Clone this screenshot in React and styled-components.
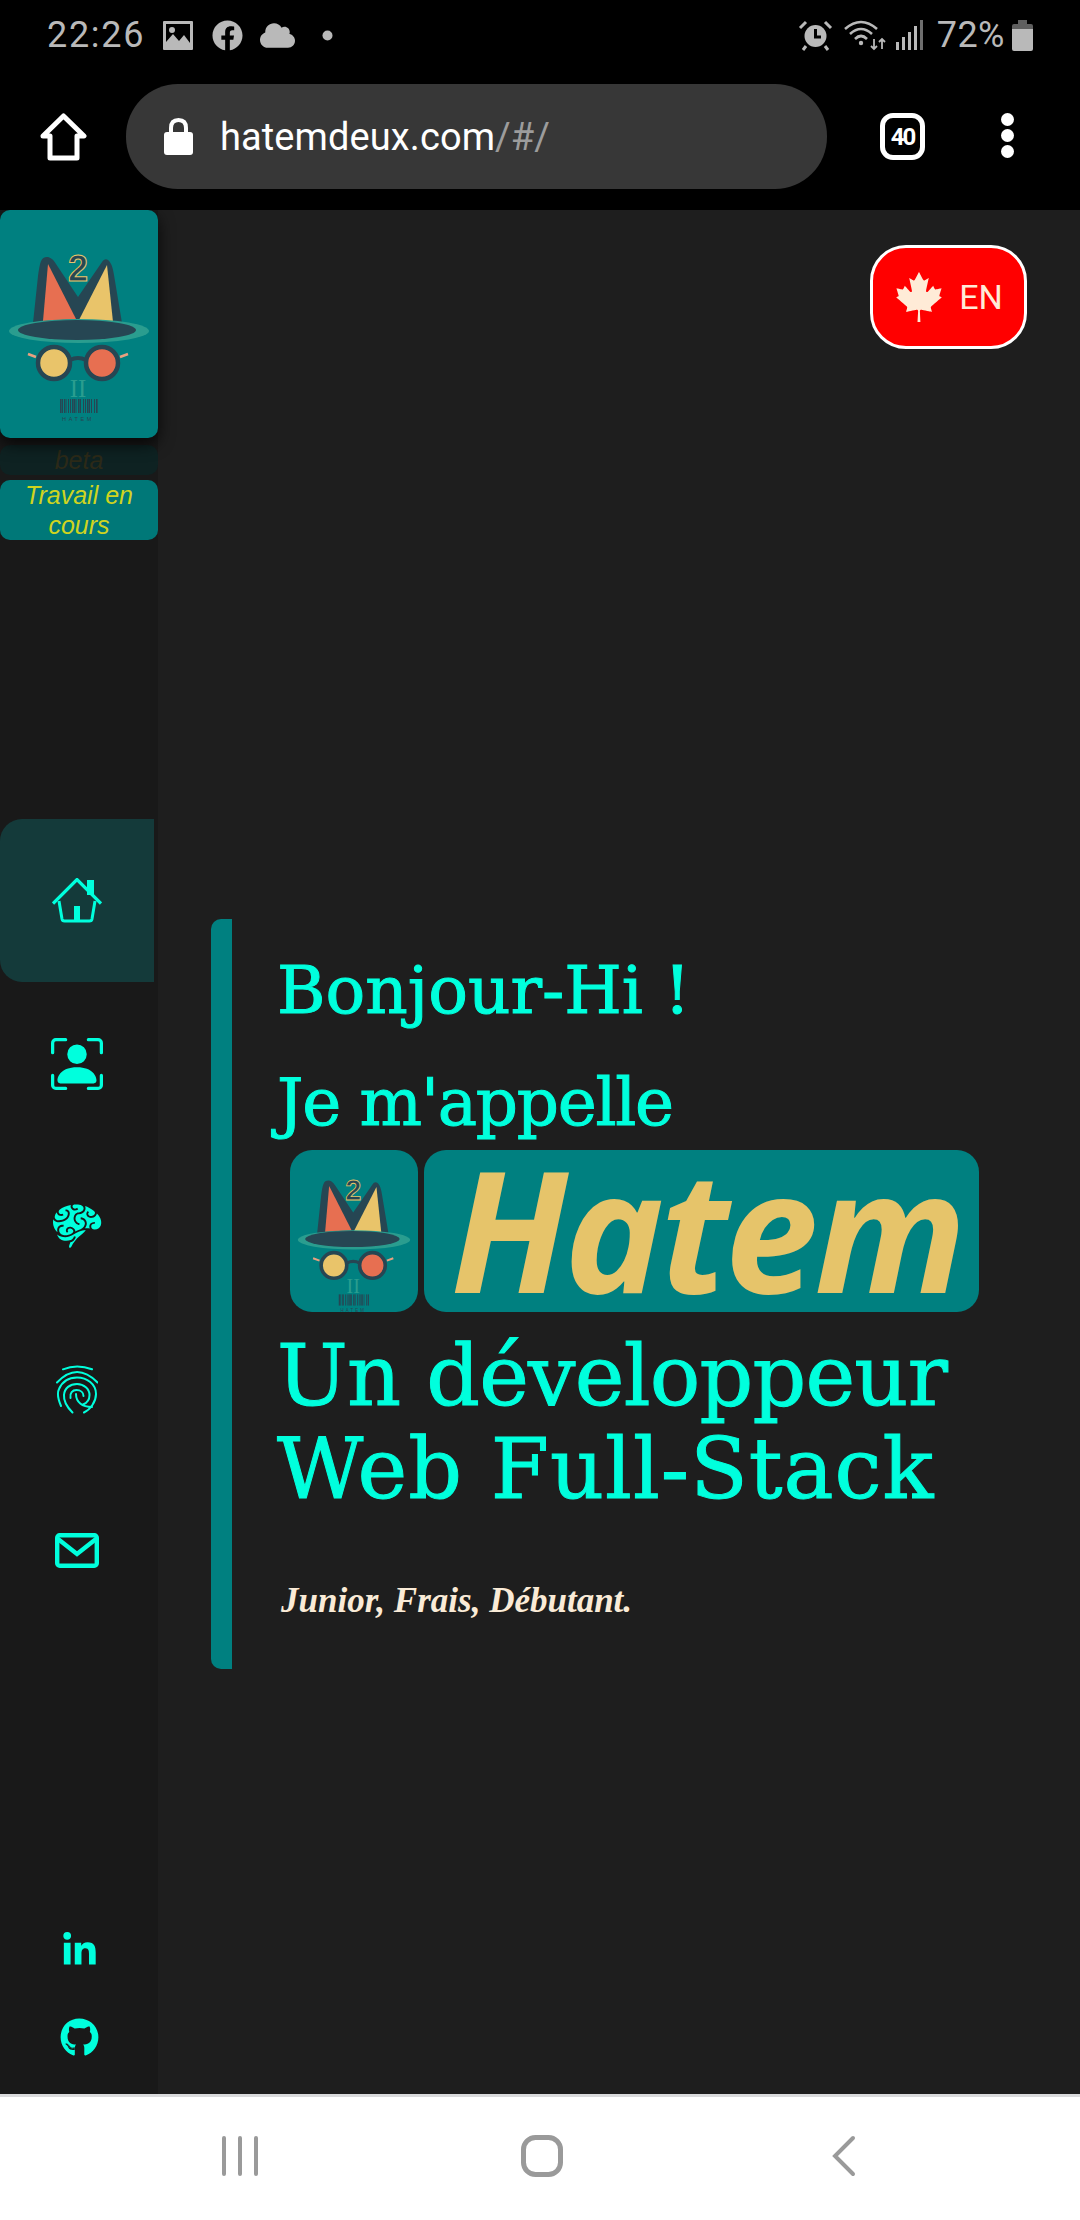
import React from 'react';
import styled, { createGlobalStyle } from 'styled-components';
import { FaCanadianMapleLeaf, FaLinkedinIn, FaGithub, FaFacebook, FaCloud } from 'react-icons/fa';
import { GiBrain } from 'react-icons/gi';
import { BsPersonBoundingBox } from 'react-icons/bs';

const AQUA = '#00ffdd';
const TEAL = '#008080';
const STATUS = '#b9b9b9';

const GlobalStyle = createGlobalStyle`
  html, body { margin: 0; padding: 0; background: #000; }
  * { box-sizing: border-box; }
`;

const Phone = styled.div`
  width: 1080px;
  height: 2220px;
  display: flex;
  flex-direction: column;
  background: #1e1e1e;
  overflow: hidden;
  font-family: Roboto, 'Liberation Sans', sans-serif;
`;

const StatusBar = styled.div`
  height: 70px;
  flex: none;
  background: #000;
  color: ${STATUS};
  display: flex;
  align-items: center;
  padding: 0 47px 0 47px;
  font-size: 36px;
`;

const StatusGroup = styled.div`
  display: flex;
  align-items: center;
`;

const Clock = styled.span`
  width: 112px;
  letter-spacing: 1.7px;
`;

const Spacer = styled.div`
  flex: 1;
`;

const Percent = styled.span`
  margin: 0 7px 0 13px;
  letter-spacing: 0.5px;
`;

const BrowserBar = styled.div`
  height: 140px;
  flex: none;
  background: #000;
  display: flex;
  align-items: flex-start;
  padding: 14px 0 0 40px;
`;

const BrowserHome = styled.svg`
  width: 47px;
  height: 48px;
  margin-top: 29px;
  flex: none;
`;

const UrlPill = styled.div`
  width: 701px;
  height: 105px;
  margin-left: 39px;
  border-radius: 52px;
  background: #373737;
  display: flex;
  align-items: center;
  padding-left: 38px;
`;

const Url = styled.span`
  margin-left: 27px;
  font-size: 38px;
  color: #fff;
  letter-spacing: 0.1px;
`;

const UrlPath = styled.span`
  color: #9c9c9c;
`;

const TabCount = styled.div`
  width: 45px;
  height: 47px;
  margin: 29px 0 0 53px;
  border: 5px solid #fff;
  border-radius: 13px;
  color: #fff;
  font-size: 24px;
  font-weight: 700;
  letter-spacing: -2px;
  display: flex;
  align-items: center;
  justify-content: center;
`;

const MenuDots = styled.div`
  margin: 29px 0 0 76px;
  display: flex;
  flex-direction: column;
  gap: 3px;
`;

const MenuDot = styled.span`
  width: 13px;
  height: 13px;
  border-radius: 50%;
  background: #fff;
`;

const Page = styled.div`
  flex: 1;
  display: flex;
  min-height: 0;
`;

const Sidebar = styled.aside`
  width: 158px;
  flex: none;
  background: #191919;
  display: flex;
  flex-direction: column;
`;

const LogoCard = styled.div`
  height: 228px;
  background: ${TEAL};
  border-radius: 10px;
  box-shadow: 0 6px 16px rgba(0, 0, 0, 0.75);
  position: relative;
`;

const BetaTag = styled.div`
  height: 30px;
  margin-top: 7px;
  border-radius: 10px;
  background: #0e2222;
  color: #2c2a18;
  font: italic 25px/30px 'Liberation Sans', Arial, sans-serif;
  text-align: center;
`;

const WipTag = styled.div`
  height: 60px;
  margin-top: 5px;
  border-radius: 10px;
  background: #007878;
  color: #cfd41f;
  font: italic 25px/30px 'Liberation Sans', Arial, sans-serif;
  text-align: center;
`;

const Nav = styled.nav`
  margin-top: 279px;
  display: flex;
  flex-direction: column;
`;

const NavItem = styled.div`
  width: 154px;
  height: 163px;
  display: flex;
  align-items: center;
  justify-content: center;
  padding-bottom: ${(p) => p.$lift || 0}px;
  color: ${AQUA};
  background: ${(p) => (p.$active ? '#143a3a' : 'transparent')};
  border-radius: 22px 0 0 22px;
`;

const Socials = styled.div`
  margin-top: auto;
  padding-bottom: 37px;
  display: flex;
  flex-direction: column;
  align-items: center;
  gap: 49px;
  color: ${AQUA};
`;

const Main = styled.main`
  flex: 1;
  display: flex;
  flex-direction: column;
  align-items: flex-start;
  padding: 35px 53px 0;
`;

const LangButton = styled.button`
  align-self: flex-end;
  width: 157px;
  height: 104px;
  border: 3px solid #fff;
  border-radius: 36px;
  background: #f00;
  color: #ffebd7;
  font: 400 34px Roboto, sans-serif;
  display: flex;
  align-items: center;
  justify-content: center;
  gap: 15px;
  padding: 0;
`;

const Hero = styled.section`
  margin-top: 570px;
  width: 768px;
  height: 750px;
  border-left: 21px solid ${TEAL};
  border-radius: 10px 0 0 10px;
  padding-left: 45px;
  color: ${AQUA};
  font-family: 'DejaVu Serif', 'Liberation Serif', serif;
  -webkit-text-stroke: 1px ${AQUA};
`;

const Greetings = styled.div`
  padding-top: 27px;
  display: flex;
  flex-direction: column;
  gap: 22px;
`;

const Greeting = styled.div`
  font-size: 66px;
  line-height: 90px;
  white-space: nowrap;
  letter-spacing: ${(p) => p.$spacing || 0}px;
`;

const NameRow = styled.div`
  display: flex;
  gap: 6px;
  margin: 2px 0 0 13px;
  -webkit-text-stroke: 0;
`;

const LogoTile = styled.div`
  width: 128px;
  height: 162px;
  background: ${TEAL};
  border-radius: 22px;
  overflow: hidden;
`;

const NameTile = styled.div`
  width: 555px;
  height: 162px;
  padding-left: 10px;
  background: ${TEAL};
  border-radius: 22px;
  color: #e6c46a;
  font: italic 700 168px/156px 'Open Sans', sans-serif;
  text-align: center;
  letter-spacing: -4px;
`;

const Headline = styled.h1`
  margin: 18px 0 0;
  font-size: 84px;
  font-weight: 400;
  line-height: 93px;
`;

const HeadlineLine = styled.div`
  white-space: nowrap;
  letter-spacing: ${(p) => p.$spacing || 0}px;
`;

const Tagline = styled.p`
  margin: 63px 0 0 4px;
  color: #faebd7;
  font: italic 700 35px/44px 'Liberation Serif', serif;
  -webkit-text-stroke: 0;
`;

const BottomNav = styled.div`
  height: 126px;
  flex: none;
  background: #fff;
  border-top: 3px solid #d9dadc;
  display: grid;
  grid-template-columns: repeat(3, 1fr);
  align-items: center;
  justify-items: center;
  padding: 0 85px 5px 89px;
`;

function HatLogo({ viewBox = '0 0 158 228' }) {
  const bars = [60, 62, 64, 65.5, 68, 70, 72, 74, 75.5, 78, 80, 83, 85, 87, 89, 91, 94, 96];
  return (
    <svg viewBox={viewBox} width="100%" height="100%">
      <path d="M47 47 C41 47 40 52 38 66 L33 113 H122 L114 65 C112 50 106 46 102 52 L78 87 L56 54 C53 49 50 47 47 47Z" fill="#264653" />
      <path d="M48 54 L43 111 L76 109Z" fill="#e76f51" />
      <path d="M107 55 L79 110 L113 112Z" fill="#e9c46a" />
      <text x="78" y="71" textAnchor="middle" fontFamily="'Liberation Sans', sans-serif" fontWeight="700" fontSize="36" fill="#264653" stroke="#e9c46a" strokeWidth="1">2</text>
      <ellipse cx="79" cy="121" rx="70" ry="12" fill="#2a9d8f" />
      <ellipse cx="77" cy="120" rx="59" ry="10" fill="#264653" />
      <path d="M28 144 L36 147 M128 144 L120 147" stroke="#e9a080" strokeWidth="2.5" />
      <path d="M70 150 Q78 146 86 150" stroke="#264653" strokeWidth="4" fill="none" />
      <circle cx="54" cy="153" r="16" fill="#e9c46a" stroke="#264653" strokeWidth="4.5" />
      <circle cx="102" cy="153" r="16" fill="#e76f51" stroke="#264653" strokeWidth="4.5" />
      <text x="78" y="187" textAnchor="middle" fontFamily="'Liberation Serif', serif" fontSize="25" fill="#2a9d8f">II</text>
      {bars.map((x) => (
        <rect key={x} x={x} y="189" width={x % 3 === 0 ? 1.6 : 1} height="14" fill="#264653" />
      ))}
      <text x="78" y="211" textAnchor="middle" fontFamily="'Liberation Sans', sans-serif" fontSize="5.5" letterSpacing="2.6" fill="#264653">HATEM</text>
    </svg>
  );
}

const HomeIcon = () => (
  <svg width="50" height="45" viewBox="0 0 50 45" fill="none" stroke={AQUA}>
    <path d="M1 25.5 L25 1.5 L49 25.5" strokeWidth="3.2" />
    <path d="M7 23 L10 41 Q10.400 43 12.500 43 H37.500 Q39.600 43 40 41 L43 23" strokeWidth="3" />
    <rect x="22" y="28" width="6" height="15" fill={AQUA} stroke="none" />
    <rect x="35" y="2" width="7" height="15" fill={AQUA} stroke="none" />
  </svg>
);

const FingerprintIcon = () => (
  <svg width="42" height="49" viewBox="0 0 42 49" fill="none" stroke={AQUA} strokeWidth="2" strokeLinecap="round">
    <path d="M7 4.300 Q21 -1.500 36 4.300" />
    <path d="M1 17.500 Q21 -3.500 41.500 17.500" />
    <path d="M5 41 C2 34 1 28 3 24 C7 15 14 12.500 21 12.500 C31 12.500 40 19 40 29 C40 37 34 45 28 47.500" />
    <path d="M16.500 47.500 C11 42 7.500 36 8 30 C8.500 23 14 19 21 19 C28 19 33.500 24 33.500 30 C33.500 35 31 38 27 39.500" />
    <path d="M36 42 C26 42 20 37 20 29" />
    <path d="M14.500 33 C13.500 28 16.500 25 20.500 25 C24.500 25 27.500 27.500 27.500 31" />
  </svg>
);

const MailIcon = () => (
  <svg width="44" height="35" viewBox="0 0 44 35" fill="none" stroke={AQUA} strokeWidth="4.4">
    <rect x="2.200" y="2.200" width="39.600" height="30.600" rx="2.500" />
    <path d="M3 6 L22 21 L41 6" />
  </svg>
);

const ImageIcon = () => (
  <svg width="30" height="29" viewBox="0 0 30 29" style={{ marginLeft: 4 }}>
    <path fillRule="evenodd" fill={STATUS} d="M1 0H29Q30 0 30 1V28Q30 29 29 29H1Q0 29 0 28V1Q0 0 1 0ZM3 3V21L10 13L16 20L21 14L27 22V3Z" />
    <circle cx="9" cy="9" r="3" fill={STATUS} />
  </svg>
);

const AlarmIcon = () => (
  <svg width="35" height="31" viewBox="0 0 35 31" fill="none" stroke={STATUS}>
    <circle cx="17.500" cy="16" r="11" fill={STATUS} stroke="none" />
    <path d="M17.500 9V17H23" stroke="#000" strokeWidth="3" />
    <path d="M2 8L8 2M33 8L27 2M8 26L5 30M27 26L30 30" strokeWidth="3" />
  </svg>
);

const WifiIcon = () => (
  <svg width="42" height="31" viewBox="0 0 42 31" fill="none" stroke={STATUS} strokeWidth="2.600" style={{ marginLeft: 11 }}>
    <path d="M1 9Q17 -5 33 9M6 14Q17 4 28 14M11 19Q17 13 23 19" />
    <circle cx="17" cy="23" r="2.200" fill={STATUS} stroke="none" />
    <path d="M30 19V29M27 26L30 29L33 26M38 29V19M35 22L38 19L41 22" strokeWidth="1.800" />
  </svg>
);

const SignalIcon = () => (
  <svg width="28" height="30" viewBox="0 0 28 30" fill={STATUS} style={{ marginLeft: 10 }}>
    <rect x="0" y="22" width="3" height="8" />
    <rect x="6" y="17" width="3" height="13" />
    <rect x="12" y="12" width="3" height="18" />
    <rect x="18" y="6" width="3" height="24" />
    <rect x="24" y="0" width="3" height="30" opacity="0.6" />
  </svg>
);

const BatteryIcon = () => (
  <svg width="21" height="31" viewBox="0 0 21 31">
    <path d="M6 0H15V4H19Q21 4 21 6V9H0V6Q0 4 2 4H6Z" fill="#5f5f5f" />
    <path d="M0 9H21V29Q21 31 19 31H2Q0 31 0 29Z" fill={STATUS} />
  </svg>
);

const LockIcon = () => (
  <svg width="29" height="37" viewBox="0 0 29 37" fill="#fff" style={{ flex: 'none' }}>
    <path d="M7 15V10Q7 2 14.500 2Q22 2 22 10V15" fill="none" stroke="#fff" strokeWidth="4" />
    <rect x="0" y="14" width="29" height="23" rx="3" />
  </svg>
);

const BackIcon = () => (
  <svg width="24" height="42" viewBox="0 0 24 42" fill="none" stroke="#9a9a9a" strokeWidth="4" strokeLinecap="round">
    <path d="M21 3L3 21L21 39" />
  </svg>
);

const TaskIcon = () => (
  <svg width="38" height="40" viewBox="0 0 38 40" stroke="#9a9a9a" strokeWidth="4" strokeLinecap="round">
    <path d="M3 2V38M19 2V38M35 2V38" />
  </svg>
);

const SquircleIcon = () => (
  <svg width="42" height="42" viewBox="0 0 42 42" fill="none" stroke="#9a9a9a" strokeWidth="5">
    <rect x="2.500" y="2.500" width="37" height="37" rx="12" />
  </svg>
);

export default function App() {
  return (
    <>
      <GlobalStyle />
      <Phone>
        <StatusBar>
          <StatusGroup>
            <Clock>22:26</Clock>
            <ImageIcon />
            <FaFacebook size={31} style={{ marginLeft: 19 }} />
            <FaCloud size={35} style={{ marginLeft: 17 }} />
            <svg width="11" height="11" style={{ marginLeft: 27 }}><circle cx="5.500" cy="5.500" r="5" fill={STATUS} /></svg>
          </StatusGroup>
          <Spacer />
          <StatusGroup>
            <AlarmIcon />
            <WifiIcon />
            <SignalIcon />
            <Percent>72%</Percent>
            <BatteryIcon />
          </StatusGroup>
        </StatusBar>
        <BrowserBar>
          <BrowserHome viewBox="0 0 47 48" fill="none" stroke="#fff" strokeWidth="5" strokeLinejoin="round">
            <path d="M3 23 L23.500 3 L44 23 H37 V45 H10 V23Z" />
          </BrowserHome>
          <UrlPill>
            <LockIcon />
            <Url>hatemdeux.com<UrlPath>/#/</UrlPath></Url>
          </UrlPill>
          <TabCount>40</TabCount>
          <MenuDots>
            <MenuDot />
            <MenuDot />
            <MenuDot />
          </MenuDots>
        </BrowserBar>
        <Page>
          <Sidebar>
            <LogoCard><HatLogo /></LogoCard>
            <BetaTag>beta</BetaTag>
            <WipTag>Travail en cours</WipTag>
            <Nav>
              <NavItem $active><HomeIcon /></NavItem>
              <NavItem><BsPersonBoundingBox size={52} /></NavItem>
              <NavItem $lift={4}><GiBrain size={52} /></NavItem>
              <NavItem><FingerprintIcon /></NavItem>
              <NavItem $lift={4}><MailIcon /></NavItem>
            </Nav>
            <Socials>
              <FaLinkedinIn size={37} />
              <FaGithub size={39} />
            </Socials>
          </Sidebar>
          <Main>
            <LangButton><FaCanadianMapleLeaf size={50} />EN</LangButton>
            <Hero>
              <Greetings>
                <Greeting>Bonjour-Hi !</Greeting>
                <Greeting $spacing={-1.3}>Je m'appelle</Greeting>
              </Greetings>
              <NameRow>
                <LogoTile><HatLogo viewBox="0 9 158 202" /></LogoTile>
                <NameTile>Hatem</NameTile>
              </NameRow>
              <Headline>
                <HeadlineLine $spacing={-0.8}>Un développeur</HeadlineLine>
                <HeadlineLine $spacing={1}>Web Full-Stack</HeadlineLine>
              </Headline>
              <Tagline>Junior, Frais, Débutant.</Tagline>
            </Hero>
          </Main>
        </Page>
        <BottomNav>
          <TaskIcon />
          <SquircleIcon />
          <BackIcon />
        </BottomNav>
      </Phone>
    </>
  );
}
